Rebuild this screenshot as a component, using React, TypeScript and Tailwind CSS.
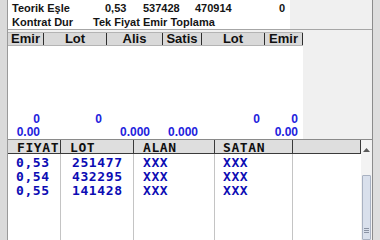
import React from "react";

const topCols = [
  { w: "w-[36px]", label: "Emir" },
  { w: "w-[63px]", label: "Lot" },
  { w: "w-[56px]", label: "Alis" },
  { w: "w-[39px]", label: "Satis" },
  { w: "w-[63px]", label: "Lot" },
  { w: "w-[38px]", label: "Emir" },
];

const rowA = [
  { w: "w-[36px]", pr: "pr-[4px]", v: "0" },
  { w: "w-[63px]", pr: "pr-[5px]", v: "0" },
  { w: "w-[56px]", pr: "pr-[13px]", v: "" },
  { w: "w-[39px]", pr: "pr-[4px]", v: "" },
  { w: "w-[63px]", pr: "pr-[5px]", v: "0" },
  { w: "w-[38px]", pr: "pr-[5px]", v: "0" },
];
const rowB = [
  { w: "w-[36px]", pr: "pr-[4px]", v: "0.00" },
  { w: "w-[63px]", pr: "pr-[5px]", v: "" },
  { w: "w-[56px]", pr: "pr-[13px]", v: "0.000" },
  { w: "w-[39px]", pr: "pr-[4px]", v: "0.000" },
  { w: "w-[63px]", pr: "pr-[5px]", v: "" },
  { w: "w-[38px]", pr: "pr-[5px]", v: "0.00" },
];

const data = [
  ["0,53", "251477", "XXX", "XXX"],
  ["0,54", "432295", "XXX", "XXX"],
  ["0,55", "141428", "XXX", "XXX"],
];

const lowCols = [
  { w: "w-[53px]", hp: "pl-[9px]", dp: "pl-[8px]", label: "FIYAT" },
  { w: "w-[73px]", hp: "pl-[9px]", dp: "pl-[11px]", label: "LOT" },
  { w: "w-[81px]", hp: "pl-[9px]", dp: "pl-[9px]", label: "ALAN" },
  { w: "w-[78px]", hp: "pl-[8px]", dp: "pl-[8px]", label: "SATAN" },
  { w: "w-[68px]", hp: "pl-[8px]", dp: "pl-[8px]", label: "" },
];

export default function App() {
  return (
    <div className="w-[380px] h-[240px] flex overflow-hidden bg-[#f0f0f0] font-['Liberation_Sans',Arial,sans-serif]">
      <div className="w-[8px] shrink-0 bg-[#dadada] border-r border-[#9a9a9a]" />
      <div className="w-[364px] shrink-0 flex flex-col">
        {/* top info */}
        <div className="h-[30px] shrink-0 flex border-b border-[#a6a6a6]">
          <div className="w-[282px] bg-white pt-[1px] pl-[4px] text-[11px] font-bold leading-[14px] text-[#141414]">
            <div className="flex h-[14px]">
              <span className="w-[93px]">Teorik Eşle</span>
              <span className="w-[38px]">0,53</span>
              <span className="w-[52px]">537428</span>
              <span className="flex-1">470914</span>
              <span className="pr-[5px]">0</span>
            </div>
            <div className="flex h-[14px]">
              <span className="w-[81px]">Kontrat Dur</span>
              <span>Tek Fiyat Emir Toplama</span>
            </div>
          </div>
          <div className="flex-1 bg-[#f0f0f0]" />
        </div>
        {/* middle */}
        <div className="h-[109px] shrink-0 flex">
          <div className="w-[295px] flex flex-col pt-[2px]">
            <div className="h-[14px] flex bg-[#d9d9d9] border-t border-[#b4b4b4] border-b border-[#2e2e2e]">
              {topCols.map((c, i) => (
                <div
                  key={i}
                  className={`${c.w} h-full border-r border-[#2e2e2e] text-center text-[13px] font-bold leading-[12px] text-[#101010]`}
                >
                  {c.label}
                </div>
              ))}
            </div>
            <div className="flex-1 bg-white flex flex-col justify-end text-[12px] font-bold leading-[13px] text-[#2222dd]">
              <div className="flex h-[13px]">
                {rowA.map((c, i) => (
                  <div key={i} className={`${c.w} ${c.pr} text-right`}>
                    {c.v}
                  </div>
                ))}
              </div>
              <div className="flex h-[13px]">
                {rowB.map((c, i) => (
                  <div key={i} className={`${c.w} ${c.pr} text-right`}>
                    {c.v}
                  </div>
                ))}
              </div>
            </div>
          </div>
          <div className="flex-1 bg-[#f0f0f0]" />
        </div>
        {/* lower grid */}
        <div className="flex-1 flex border-t border-[#8a8a8a] font-['DejaVu_Sans_Mono',monospace] text-[13px] font-bold tracking-[0.6px]">
          <div className="w-[353px] flex flex-col">
            <div className="h-[14px] shrink-0 flex bg-[#dedede] border-b border-[#3a3a3a]">
              {lowCols.map((c, i) => (
                <div
                  key={i}
                  className={`${c.w} ${c.hp} h-full pt-[1px] leading-[13px] border-r border-[#3a3a3a] text-[#101010] whitespace-nowrap`}
                >
                  {c.label}
                </div>
              ))}
            </div>
            <div className="flex-1 flex bg-white">
              {lowCols.map((c, ci) => (
                <div
                  key={ci}
                  className={`${c.w} ${c.dp} h-full pt-[2px] ${ci < 4 ? "border-r border-[#c4c4c4]" : ""} text-[#0c0cb4]`}
                >
                  {ci < 4 &&
                    data.map((r, ri) => (
                      <div key={ri} className="h-[14px] leading-[14px]">
                        {r[ci]}
                      </div>
                    ))}
                </div>
              ))}
            </div>
          </div>
          {/* scrollbar */}
          <div className="w-[11px] flex flex-col bg-[#f3f3f3]">
            <div className="h-[20px] shrink-0 flex items-center justify-center">
              <svg width="7" height="4" viewBox="0 0 7 4">
                <polygon points="0,4 7,4 3.5,0" fill="#5a5a5a" />
              </svg>
            </div>
            <div className="h-[15px] shrink-0" />
            <div className="flex-1 mx-[1px] bg-[#d9e0ec] border border-[#a9b2c2] rounded-[1px] flex flex-col justify-end items-center pb-[6px] gap-[1px]">
              <div className="w-[5px] h-[1px] bg-[#8a93a4]" />
              <div className="w-[5px] h-[1px] bg-[#8a93a4]" />
              <div className="w-[5px] h-[1px] bg-[#8a93a4]" />
            </div>
          </div>
        </div>
      </div>
      <div className="flex-1 bg-[#dedede] border-l border-[#8c8c8c]" />
    </div>
  );
}
